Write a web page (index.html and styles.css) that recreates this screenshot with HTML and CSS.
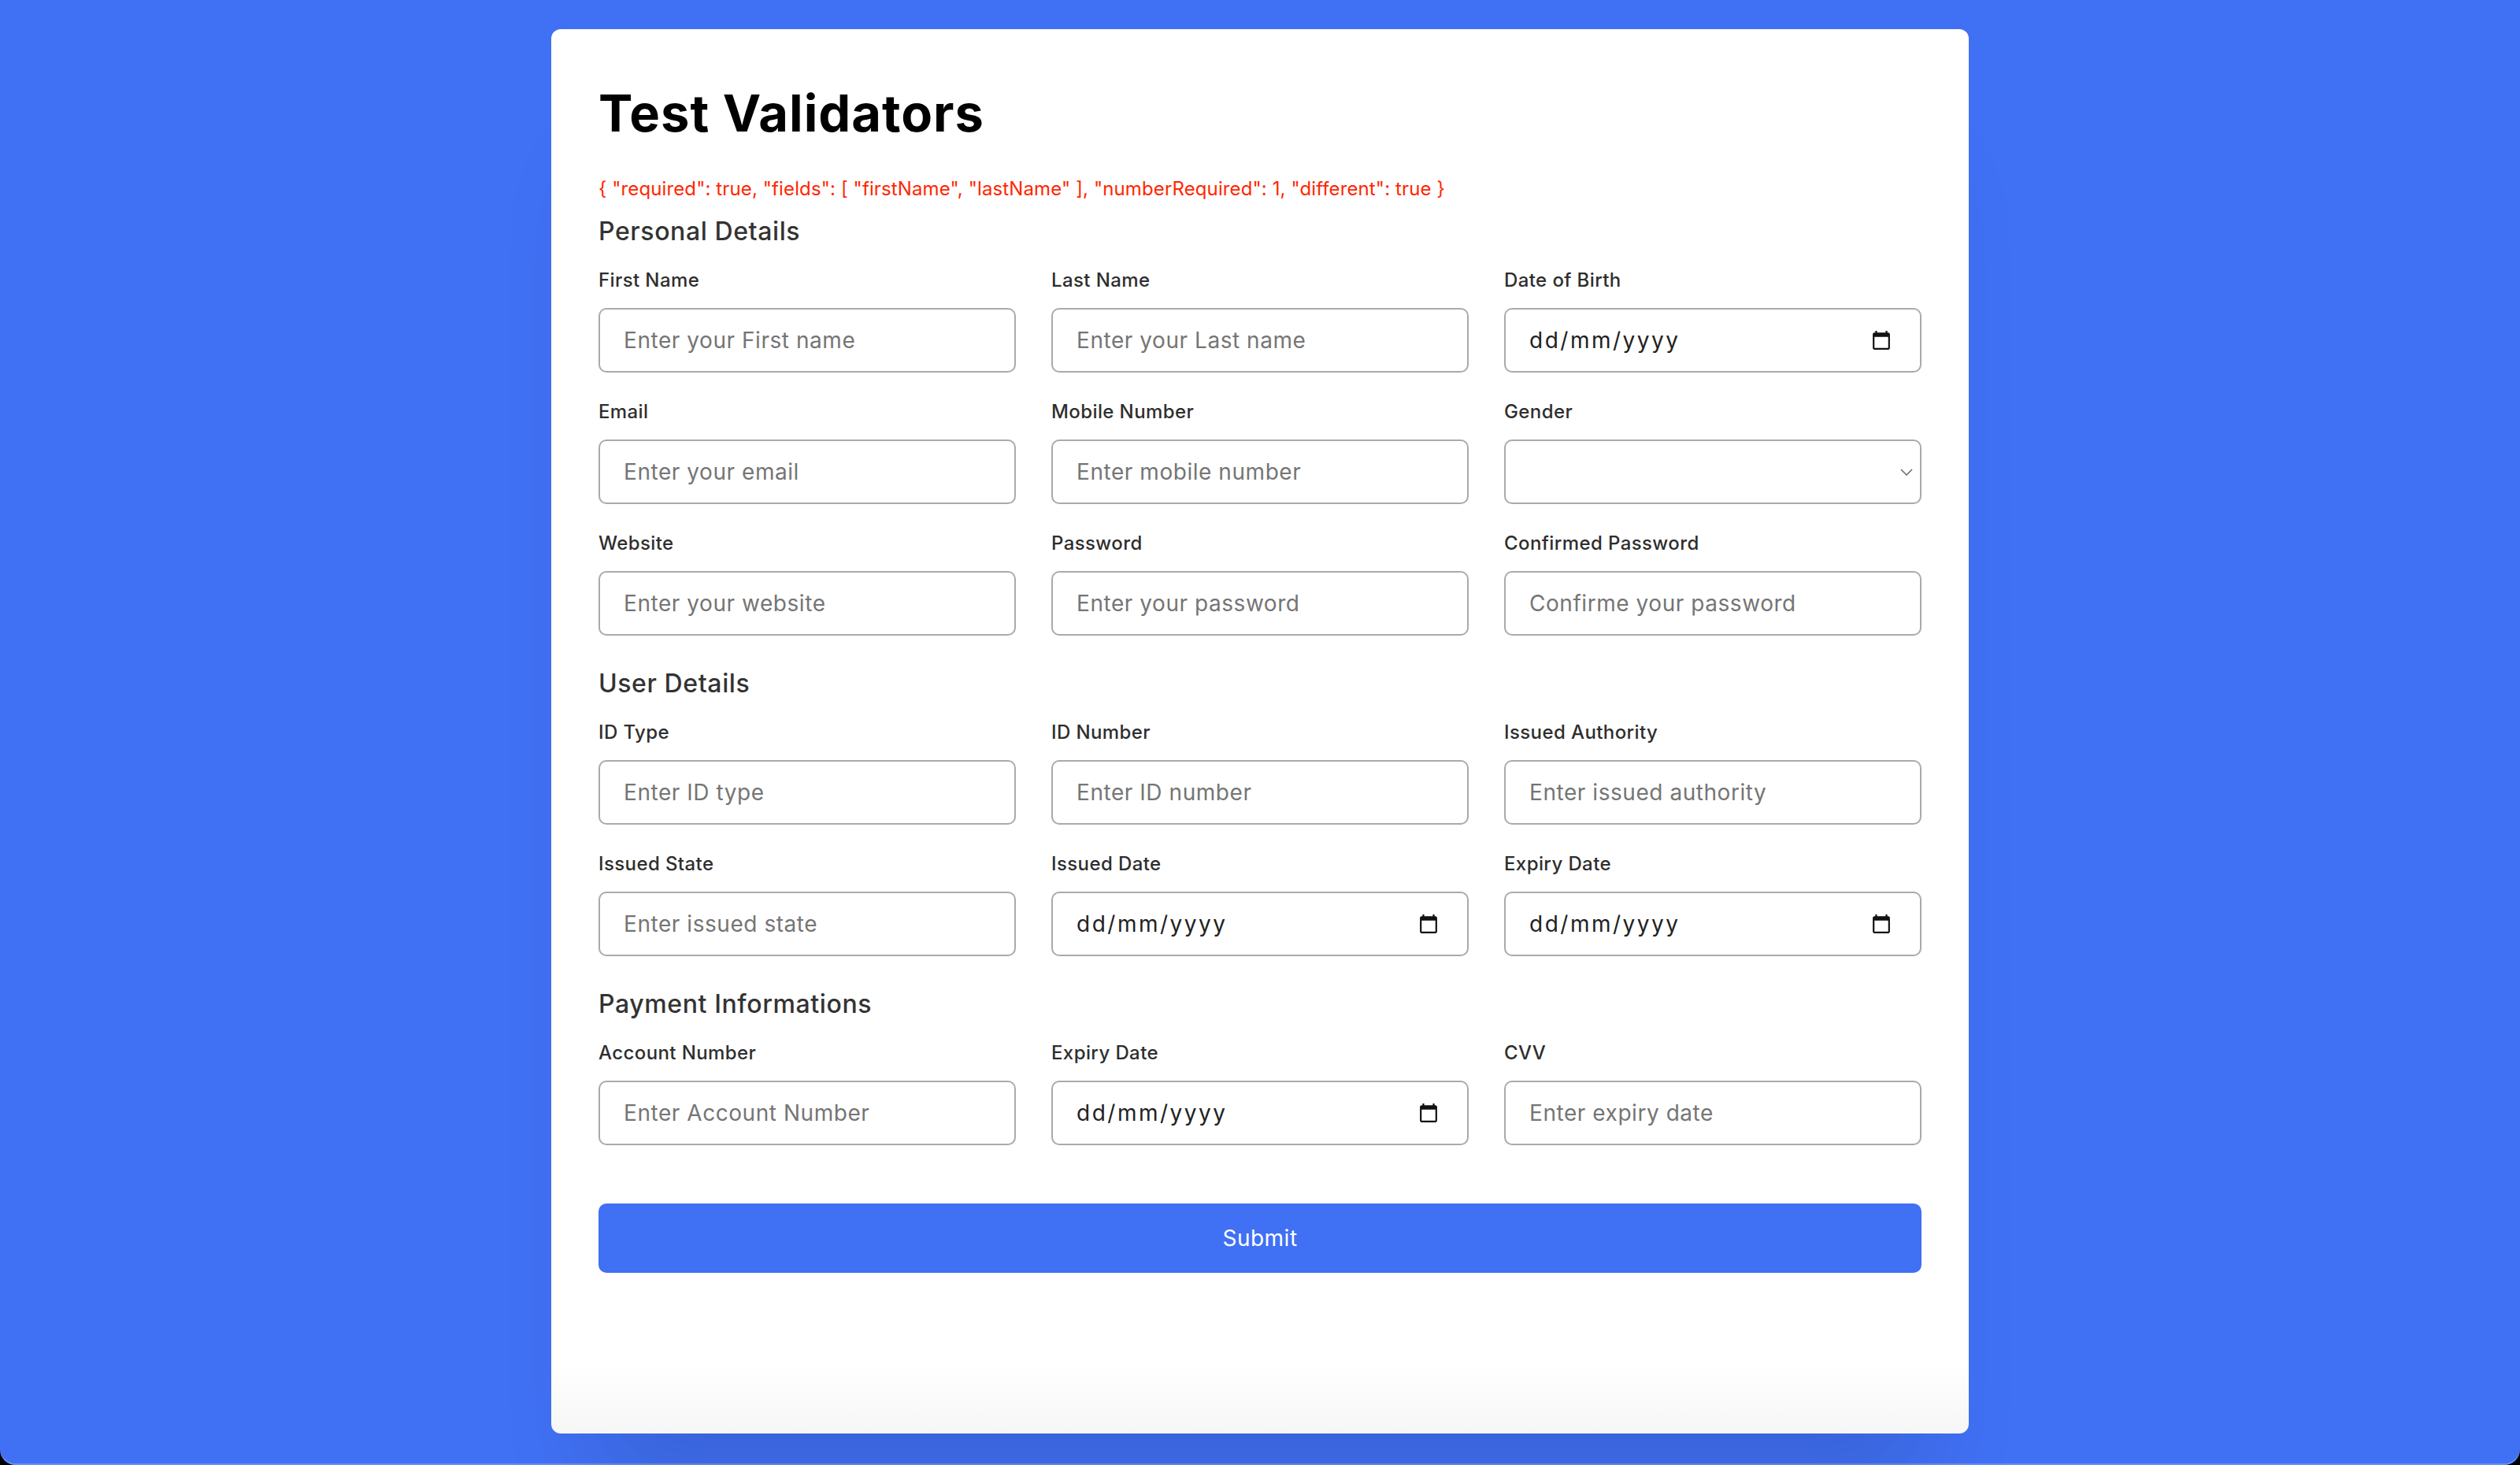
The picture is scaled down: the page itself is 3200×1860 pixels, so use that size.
FILE: index.html
```html
<!DOCTYPE html>
<html lang="en">
<head>
<meta charset="utf-8">
<title>Test Validators</title>
<link rel="stylesheet" href="styles.css">
</head>
<body>
<div class="window">
  <div class="card">
    <h1 class="title">Test Validators</h1>
    <div class="rule">{ "required": true, "fields": [ "firstName", "lastName" ], "numberRequired": 1, "different": true }</div>

    <div class="section-title first">Personal Details</div>
    <div class="fields">
      <div class="field"><label>First Name</label><input type="text" placeholder="Enter your First name"></div>
      <div class="field"><label>Last Name</label><input type="text" placeholder="Enter your Last name"></div>
      <div class="field"><label>Date of Birth</label><div class="control date"><span>dd/mm/yyyy</span><svg class="cal" viewBox="2 1 20 22"><path d="M20 3h-1V1h-2v2H7V1H5v2H4c-1.1 0-2 .9-2 2v16c0 1.1.9 2 2 2h16c1.1 0 2-.9 2-2V5c0-1.1-.9-2-2-2zm0 18H4V8h16v13z"/></svg></div></div>
      <div class="field"><label>Email</label><input type="text" placeholder="Enter your email"></div>
      <div class="field"><label>Mobile Number</label><input type="text" placeholder="Enter mobile number"></div>
      <div class="field"><label>Gender</label><div class="control select"><svg class="chev" viewBox="0 0 16 9"><path d="M1 1l7 7 7-7"/></svg></div></div>
      <div class="field"><label>Website</label><input type="text" placeholder="Enter your website"></div>
      <div class="field"><label>Password</label><input type="text" placeholder="Enter your password"></div>
      <div class="field"><label>Confirmed Password</label><input type="text" placeholder="Confirme your password"></div>
    </div>

    <div class="section-title">User Details</div>
    <div class="fields">
      <div class="field"><label>ID Type</label><input type="text" placeholder="Enter ID type"></div>
      <div class="field"><label>ID Number</label><input type="text" placeholder="Enter ID number"></div>
      <div class="field"><label>Issued Authority</label><input type="text" placeholder="Enter issued authority"></div>
      <div class="field"><label>Issued State</label><input type="text" placeholder="Enter issued state"></div>
      <div class="field"><label>Issued Date</label><div class="control date"><span>dd/mm/yyyy</span><svg class="cal" viewBox="2 1 20 22"><path d="M20 3h-1V1h-2v2H7V1H5v2H4c-1.1 0-2 .9-2 2v16c0 1.1.9 2 2 2h16c1.1 0 2-.9 2-2V5c0-1.1-.9-2-2-2zm0 18H4V8h16v13z"/></svg></div></div>
      <div class="field"><label>Expiry Date</label><div class="control date"><span>dd/mm/yyyy</span><svg class="cal" viewBox="2 1 20 22"><path d="M20 3h-1V1h-2v2H7V1H5v2H4c-1.1 0-2 .9-2 2v16c0 1.1.9 2 2 2h16c1.1 0 2-.9 2-2V5c0-1.1-.9-2-2-2zm0 18H4V8h16v13z"/></svg></div></div>
    </div>

    <div class="section-title">Payment Informations</div>
    <div class="fields">
      <div class="field"><label>Account Number</label><input type="text" placeholder="Enter Account Number"></div>
      <div class="field"><label>Expiry Date</label><div class="control date"><span>dd/mm/yyyy</span><svg class="cal" viewBox="2 1 20 22"><path d="M20 3h-1V1h-2v2H7V1H5v2H4c-1.1 0-2 .9-2 2v16c0 1.1.9 2 2 2h16c1.1 0 2-.9 2-2V5c0-1.1-.9-2-2-2zm0 18H4V8h16v13z"/></svg></div></div>
      <div class="field"><label>CVV</label><input type="text" placeholder="Enter expiry date"></div>
    </div>

    <button class="submit" type="button">Submit</button>
  </div>
</div>
</body>
</html>
```

FILE: styles.css
```css
* { box-sizing: border-box; }

html, body {
  margin: 0;
  padding: 0;
  background: #000;
}

body {
  font-family: "Inter", "Noto Sans", "DejaVu Sans", sans-serif;
}

.window {
  height: 1860px;
  background: #4070f4;
  border-radius: 0 0 20px 20px;
  overflow: hidden;
  padding-top: 37px;
  box-shadow: inset 0 -2px 0 rgba(255, 255, 255, 0.22);
}

.card {
  width: 1800px;
  height: 1783px;
  margin: 0 auto;
  padding: 60px;
  border-radius: 12px;
  background: linear-gradient(to bottom, #ffffff calc(100% - 90px), #f6f6f6);
  box-shadow: 0 120px 120px -60px rgba(0, 0, 0, 0.12);
}

.title {
  margin: 2px 0 0;
  font-size: 65px;
  line-height: 90px;
  font-weight: 700;
  letter-spacing: 1px;
  color: #000;
}

.rule {
  margin-top: 34px;
  font-size: 24px;
  line-height: 34px;
  letter-spacing: 0.12px;
  color: #ff2600;
}

.section-title {
  margin: 38px 0 23px;
  font-size: 32px;
  line-height: 45px;
  font-weight: 500;
  letter-spacing: 0.6px;
  color: #333;
}

.section-title.first {
  margin-top: 14px;
}

.fields {
  display: grid;
  grid-template-columns: repeat(3, 530px);
  justify-content: space-between;
  row-gap: 33px;
}

.field {
  display: flex;
  flex-direction: column;
}

.field label {
  font-size: 24px;
  line-height: 34px;
  font-weight: 500;
  letter-spacing: 0.4px;
  color: #2e2e2e;
  margin-bottom: 18px;
}

.field input,
.control {
  height: 82px;
  width: 100%;
  border: 2px solid #aaa;
  border-radius: 10px;
  padding: 0 30px;
  font-family: inherit;
  font-size: 28px;
  letter-spacing: 0.55px;
  color: #333;
  background: #fff;
  outline: none;
}

.field input::placeholder {
  color: #757575;
}

.control {
  display: flex;
  align-items: center;
  justify-content: space-between;
}

.control.date span {
  color: #222;
  letter-spacing: 2.5px;
}

.cal {
  width: 22px;
  height: 24px;
  margin-right: 8px;
  fill: #111;
}

.control.select {
  justify-content: flex-end;
  padding-right: 9px;
}

.chev {
  width: 16px;
  height: 9px;
  fill: none;
  stroke: #6d6d6d;
  stroke-width: 1.6;
}

.submit {
  display: block;
  width: 100%;
  height: 88px;
  margin-top: 74px;
  border: none;
  border-radius: 10px;
  background: #4070f4;
  color: #fff;
  font-family: inherit;
  font-size: 28px;
  font-weight: 400;
  letter-spacing: 0.5px;
}
```
